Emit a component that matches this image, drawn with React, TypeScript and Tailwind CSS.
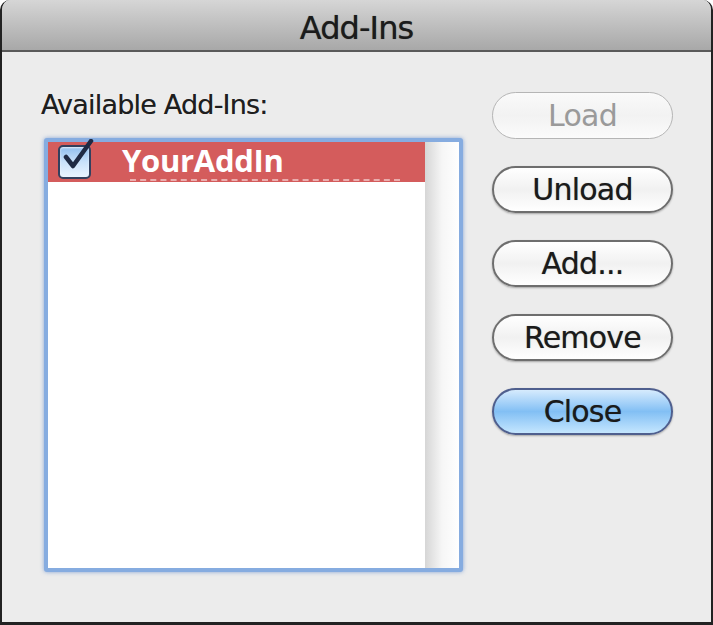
import React from 'react';

const buttonBase =
  'w-[181px] h-[47px] rounded-full flex items-center justify-center text-[30px] leading-none tracking-[-0.8px] [text-shadow:0_0_0.7px_rgba(0,0,0,0.5)]';

const Checkbox = () => (
  <div className="relative w-[33px] h-[34px]">
    <div className="absolute inset-0 rounded-[5px] border-2 border-[#33405e] bg-gradient-to-b from-[#8fbdee] via-[#c9e1fa] to-[#eaf4ff] shadow-[inset_0_1px_2px_rgba(255,255,255,0.8)]" />
    <svg className="absolute -top-[6px] left-[3px]" width="34" height="34" viewBox="0 0 34 34">
      <path d="M5 18 L12 27 L30 2" fill="none" stroke="#1f2a44" strokeWidth="4.5" strokeLinecap="round" strokeLinejoin="round" />
    </svg>
  </div>
);

const App = () => {
  return (
    <div
      className="w-[713px] h-[625px] bg-[#ececec] border-x-2 border-b-[3px] border-[#222] rounded-t-[10px] overflow-hidden flex flex-col"
      style={{ fontFamily: '"DejaVu Sans", "Liberation Sans", sans-serif' }}
    >
      {/* title bar */}
      <div className="h-[52px] shrink-0 bg-gradient-to-b from-[#d6d6d6] to-[#a8a8a8] border-b-2 border-[#5a5a5a] flex items-center justify-center pt-[6px]">
        <span className="text-[32px] text-[#1b1b1b] tracking-[-0.9px] [text-shadow:0_0_0.8px_rgba(0,0,0,0.6)]">Add-Ins</span>
      </div>

      <div className="flex flex-1">
        {/* list column */}
        <div className="pl-[39px] pt-[37px] flex flex-col">
          <div className="text-[27px] leading-[31px] text-[#1e1e1e] tracking-[-0.8px] [text-shadow:0_0_0.6px_rgba(0,0,0,0.5)]">
            Available Add-Ins:
          </div>
          <div className="ml-[3px] mt-[18px] w-[419px] h-[434px] rounded-[3px] bg-[#86ace0] p-[4px] shadow-[0_0_4px_rgba(70,120,200,0.6)]">
            <div className="w-full h-full bg-white flex">
              <div className="flex-1 flex flex-col">
                <div className="h-[40px] bg-[#d45c5c] flex items-center pl-[10px]">
                  <Checkbox />
                  <div className="relative ml-[31px]">
                    <span
                      className="text-[31px] font-bold text-white leading-none tracking-[-0.3px]"
                      style={{ fontFamily: '"Open Sans", "Liberation Sans", sans-serif' }}
                    >
                      YourAddIn
                    </span>
                    <div className="absolute left-[8px] top-[34px] w-[270px] border-b-2 border-dashed border-white/50" />
                  </div>
                </div>
              </div>
              <div className="w-[34px] bg-gradient-to-r from-[#d6d6d6] via-[#f6f6f6] to-white" />
            </div>
          </div>
        </div>

        {/* buttons */}
        <div className="ml-[29px] pt-[40px] flex flex-col gap-[27px]">
          <div className={`${buttonBase} border border-[#b5b5b5] bg-gradient-to-b from-[#fafafa] via-[#f2f2f2] to-[#fbfbfb] text-[#9a9a9a] [text-shadow:none]`}>
            Load
          </div>
          <div className={`${buttonBase} border-2 border-[#6e6e6e] bg-gradient-to-b from-white via-[#f1f1f1] to-white text-[#1a1a1a] shadow-[0_1px_2px_rgba(0,0,0,0.3)]`}>
            Unload
          </div>
          <div className={`${buttonBase} border-2 border-[#6e6e6e] bg-gradient-to-b from-white via-[#f1f1f1] to-white text-[#1a1a1a] shadow-[0_1px_2px_rgba(0,0,0,0.3)]`}>
            Add...
          </div>
          <div className={`${buttonBase} border-2 border-[#6e6e6e] bg-gradient-to-b from-white via-[#f1f1f1] to-white text-[#1a1a1a] shadow-[0_1px_2px_rgba(0,0,0,0.3)]`}>
            Remove
          </div>
          <div className={`${buttonBase} border-2 border-[#4f5f8e] bg-gradient-to-b from-[#d6ebfd] via-[#82bff4] to-[#c4e6fe] text-[#1a1a1a] shadow-[0_1px_2px_rgba(0,0,0,0.3)]`}>
            Close
          </div>
        </div>
      </div>
    </div>
  );
};

export default App;
